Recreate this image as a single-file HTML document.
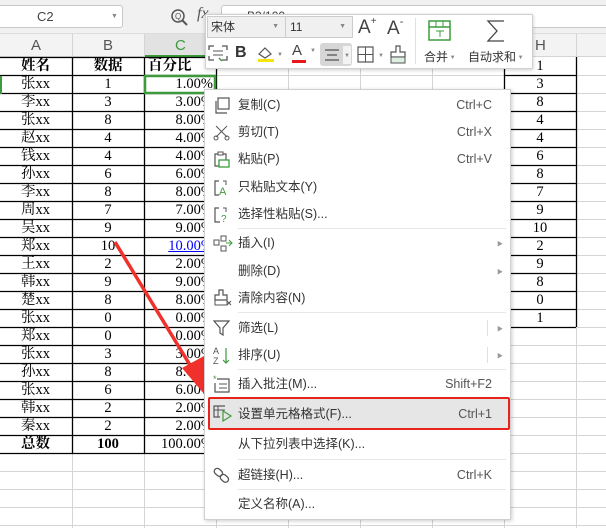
<!DOCTYPE html>
<html><head><meta charset="utf-8"><style>
*{margin:0;padding:0;box-sizing:border-box}
body{width:606px;height:528px;overflow:hidden;background:#fff;position:relative;font-family:"Liberation Sans","Noto Sans CJK SC",sans-serif}
.a{position:absolute}
.cell{position:absolute;height:18px;line-height:19px;font-family:"Liberation Serif","Noto Serif CJK SC",serif;font-size:14.5px;color:#000;white-space:nowrap;overflow:hidden}
.mi{position:absolute;left:238px;font-size:12.5px;color:#333;line-height:16px}
.sc{position:absolute;right:114px;font-size:12.5px;color:#555;line-height:16px}
.sep{position:absolute;left:238px;width:268px;height:1px;background:#e6e6e6}
.ic{position:absolute;left:213px}
</style></head><body>
<div class="a" style="left:0;top:0;width:606px;height:34px;background:#f1f1f1;border-bottom:1px solid #ddd"></div>
<div class="a" style="left:-4px;top:5px;width:127px;height:23px;background:#fff;border:1px solid #c8c8c8;border-radius:3px;font-size:13px;color:#444;line-height:21px;padding-left:40px">C2<span style="position:absolute;left:114px;top:0;font-size:7px;color:#888">▼</span></div>
<svg class="a" style="left:170px;top:8px" width="20" height="20"><circle cx="8" cy="8" r="6" fill="none" stroke="#555" stroke-width="1.5"/><line x1="12" y1="12" x2="17" y2="17" stroke="#555" stroke-width="2"/><text x="5" y="11" font-size="8" fill="#555" font-family="Liberation Sans">Q</text></svg>
<div class="a" style="left:197px;top:5px;font-family:'Liberation Serif',serif;font-style:italic;font-size:16px;color:#555">fx</div>
<div class="a" style="left:221px;top:5px;width:390px;height:23px;background:#fff;border:1px solid #c8c8c8;border-radius:3px;font-size:12px;color:#444;padding-left:18px;line-height:21px">=B3/100</div>
<div class="a" style="left:0;top:34px;width:606px;height:23px;background:#f3f3f3;border-bottom:1px solid #d4d4d4"></div>
<div class="a" style="left:144px;top:34px;width:72px;height:23px;background:#e2e2e2;border-bottom:2px solid #3d9b3d"></div>
<div class="a" style="left:0;top:34px;width:606px;height:23px;font-size:15px;color:#555;line-height:24px">
<span class="a" style="left:31px">A</span><span class="a" style="left:103px">B</span><span class="a" style="left:175px;color:#3d9b3d">C</span><span class="a" style="left:535px">H</span></div>
<svg class="a" style="left:0;top:34px" width="606" height="494">
<g stroke="#d4d4d4" stroke-width="1">
<line x1="72.5" y1="0" x2="72.5" y2="23"/><line x1="144.5" y1="0" x2="144.5" y2="23"/><line x1="216.5" y1="0" x2="216.5" y2="494"/><line x1="288.5" y1="0" x2="288.5" y2="494"/><line x1="360.5" y1="0" x2="360.5" y2="494"/><line x1="432.5" y1="0" x2="432.5" y2="494"/><line x1="504.5" y1="0" x2="504.5" y2="494"/><line x1="576.5" y1="0" x2="576.5" y2="494"/>
<line x1="72.5" y1="419" x2="72.5" y2="494"/><line x1="144.5" y1="419" x2="144.5" y2="494"/>
</g>
<g stroke="#d4d4d4">
<line x1="0" y1="41.5" x2="606" y2="41.5"/><line x1="0" y1="59.5" x2="606" y2="59.5"/><line x1="0" y1="77.5" x2="606" y2="77.5"/><line x1="0" y1="95.5" x2="606" y2="95.5"/><line x1="0" y1="113.5" x2="606" y2="113.5"/><line x1="0" y1="131.5" x2="606" y2="131.5"/><line x1="0" y1="149.5" x2="606" y2="149.5"/><line x1="0" y1="167.5" x2="606" y2="167.5"/><line x1="0" y1="185.5" x2="606" y2="185.5"/><line x1="0" y1="203.5" x2="606" y2="203.5"/><line x1="0" y1="221.5" x2="606" y2="221.5"/><line x1="0" y1="239.5" x2="606" y2="239.5"/><line x1="0" y1="257.5" x2="606" y2="257.5"/><line x1="0" y1="275.5" x2="606" y2="275.5"/><line x1="0" y1="293.5" x2="606" y2="293.5"/><line x1="0" y1="311.5" x2="606" y2="311.5"/><line x1="0" y1="329.5" x2="606" y2="329.5"/><line x1="0" y1="347.5" x2="606" y2="347.5"/><line x1="0" y1="365.5" x2="606" y2="365.5"/><line x1="0" y1="383.5" x2="606" y2="383.5"/><line x1="0" y1="401.5" x2="606" y2="401.5"/><line x1="0" y1="419.5" x2="606" y2="419.5"/><line x1="0" y1="437.5" x2="606" y2="437.5"/><line x1="0" y1="455.5" x2="606" y2="455.5"/><line x1="0" y1="473.5" x2="606" y2="473.5"/><line x1="0" y1="491.5" x2="606" y2="491.5"/>
</g>
<g stroke="#000" stroke-width="1.3">
<line x1="0" y1="23.5" x2="216" y2="23.5"/>
<line x1="72.5" y1="23" x2="72.5" y2="419"/><line x1="144.5" y1="23" x2="144.5" y2="419"/><line x1="216.5" y1="23" x2="216.5" y2="419"/>
<line x1="0" y1="41.5" x2="216" y2="41.5"/><line x1="0" y1="59.5" x2="216" y2="59.5"/><line x1="0" y1="77.5" x2="216" y2="77.5"/><line x1="0" y1="95.5" x2="216" y2="95.5"/><line x1="0" y1="113.5" x2="216" y2="113.5"/><line x1="0" y1="131.5" x2="216" y2="131.5"/><line x1="0" y1="149.5" x2="216" y2="149.5"/><line x1="0" y1="167.5" x2="216" y2="167.5"/><line x1="0" y1="185.5" x2="216" y2="185.5"/><line x1="0" y1="203.5" x2="216" y2="203.5"/><line x1="0" y1="221.5" x2="216" y2="221.5"/><line x1="0" y1="239.5" x2="216" y2="239.5"/><line x1="0" y1="257.5" x2="216" y2="257.5"/><line x1="0" y1="275.5" x2="216" y2="275.5"/><line x1="0" y1="293.5" x2="216" y2="293.5"/><line x1="0" y1="311.5" x2="216" y2="311.5"/><line x1="0" y1="329.5" x2="216" y2="329.5"/><line x1="0" y1="347.5" x2="216" y2="347.5"/><line x1="0" y1="365.5" x2="216" y2="365.5"/><line x1="0" y1="383.5" x2="216" y2="383.5"/><line x1="0" y1="401.5" x2="216" y2="401.5"/><line x1="0" y1="419.5" x2="216" y2="419.5"/>
<line x1="504.5" y1="23" x2="504.5" y2="293"/><line x1="576.5" y1="23" x2="576.5" y2="293"/>
<line x1="504" y1="41.5" x2="576" y2="41.5"/><line x1="504" y1="59.5" x2="576" y2="59.5"/><line x1="504" y1="77.5" x2="576" y2="77.5"/><line x1="504" y1="95.5" x2="576" y2="95.5"/><line x1="504" y1="113.5" x2="576" y2="113.5"/><line x1="504" y1="131.5" x2="576" y2="131.5"/><line x1="504" y1="149.5" x2="576" y2="149.5"/><line x1="504" y1="167.5" x2="576" y2="167.5"/><line x1="504" y1="185.5" x2="576" y2="185.5"/><line x1="504" y1="203.5" x2="576" y2="203.5"/><line x1="504" y1="221.5" x2="576" y2="221.5"/><line x1="504" y1="239.5" x2="576" y2="239.5"/><line x1="504" y1="257.5" x2="576" y2="257.5"/><line x1="504" y1="275.5" x2="576" y2="275.5"/><line x1="504" y1="293.5" x2="576" y2="293.5"/>
</g>
<rect x="145" y="42" width="70" height="17" fill="none" stroke="#3d9b3d" stroke-width="2.5"/>
<rect x="0" y="42" width="2" height="18" fill="#3d9b3d"/>
</svg>
<div id="cells"></div>
<script>
var A=["<b>姓名</b>","张xx","李xx","张xx","赵xx","钱xx","孙xx","李xx","周xx","吴xx","郑xx","王xx","韩xx","楚xx","张xx","郑xx","张xx","孙xx","张xx","韩xx","秦xx","<b>总数</b>"];
var B=["<b>数据</b>","1","3","8","4","4","6","8","7","9","10","2","9","8","0","0","3","8","6","2","2","<b>100</b>"];
var H=["1","3","8","4","4","6","8","7","9","10","2","9","8","0","1"];
var h="";
for(var i=0;i<22;i++){var t=57+i*18;
h+='<div class="cell" style="left:0;width:72px;top:'+t+'px;padding-left:21px">'+A[i]+'</div>';
h+='<div class="cell" style="left:72px;width:72px;top:'+t+'px;text-align:center">'+B[i]+'</div>';
var c=i==0?'<b>百分比</b>':(i==21?'100.00%':B[i]+'.00%');
var st=i==0?'padding-left:4px':'text-align:right;padding-right:3px';
if(i==10)c='<u style="color:#00f">10.00%</u>';
h+='<div class="cell" style="left:144px;width:72px;top:'+t+'px;'+st+'">'+c+'</div>';}
for(var j=0;j<15;j++){h+='<div class="cell" style="left:504px;width:72px;top:'+(57+j*18)+'px;text-align:center">'+H[j]+'</div>';}
document.getElementById('cells').innerHTML=h;
</script>
<svg class="a" style="left:0;top:0" width="606" height="528">
<line x1="115" y1="242" x2="193" y2="370" stroke="#f0302a" stroke-width="3.5"/>
<polygon points="182,368 204,356 205,395" fill="#f0302a"/>
</svg>
<div class="a" style="left:205px;top:14px;width:328px;height:55px;background:#fff;border:1px solid #d0d0d0;box-shadow:0 1px 4px rgba(0,0,0,.2)"></div>
<div class="a" style="left:207px;top:16px;width:79px;height:22px;background:#f0f0f0;border:1px solid #ccc;font-size:12px;color:#333;line-height:20px;padding-left:3px">宋体<span style="position:absolute;right:6px;font-size:7px;color:#888">▼</span></div>
<div class="a" style="left:285px;top:16px;width:68px;height:22px;background:#f0f0f0;border:1px solid #ccc;font-size:12px;color:#333;line-height:20px;padding-left:4px">11<span style="position:absolute;right:6px;font-size:7px;color:#888">▼</span></div>
<div class="a" style="left:358px;top:16px;font-size:19px;color:#444">A<sup style="font-size:10px;vertical-align:9px">+</sup></div>
<div class="a" style="left:387px;top:16px;font-size:19px;color:#444">A<sup style="font-size:11px;vertical-align:9px">-</sup></div>
<div class="a" style="left:415px;top:18px;width:1px;height:46px;background:#e0e0e0"></div>
<svg class="a" style="left:428px;top:20px" width="24" height="22"><rect x="1" y="1" width="21" height="19" fill="none" stroke="#3d9b3d" stroke-width="1.5"/><line x1="1" y1="7" x2="22" y2="7" stroke="#3d9b3d" stroke-width="1.5"/><line x1="8" y1="1" x2="8" y2="7" stroke="#3d9b3d"/><line x1="15" y1="1" x2="15" y2="7" stroke="#3d9b3d"/><line x1="8" y1="11" x2="16" y2="11" stroke="#3d9b3d"/><line x1="12" y1="11" x2="12" y2="17" stroke="#3d9b3d"/></svg>
<svg class="a" style="left:485px;top:18px" width="22" height="26"><path d="M19 3H3l9 10-9 10h16" fill="none" stroke="#444" stroke-width="1.3"/></svg>
<svg class="a" style="left:207px;top:44px" width="22" height="20"><path d="M2 6V2h5M15 2h5v4M2 12v4h5M20 12v4h-5" fill="none" stroke="#555" stroke-width="1.3"/><line x1="6" y1="7" x2="16" y2="7" stroke="#555"/><line x1="6" y1="11" x2="16" y2="11" stroke="#555"/><path d="M12 14l3 3" stroke="#3d9b3d" stroke-width="1.5"/></svg>
<div class="a" style="left:235px;top:44px;font-size:16px;font-weight:bold;color:#333">B</div>
<svg class="a" style="left:257px;top:44px" width="26" height="20"><path d="M2 10l6-6 6 6-6 4z" fill="none" stroke="#555" stroke-width="1.2"/><rect x="1" y="15" width="16" height="3" fill="#f5e50a"/><text x="20" y="12" font-size="6" fill="#888">▼</text></svg>
<div class="a" style="left:292px;top:42px;font-size:15px;color:#444">A</div>
<div class="a" style="left:292px;top:60px;width:14px;height:3px;background:#e81818"></div>
<div class="a" style="left:310px;top:48px;font-size:6px;color:#888">▼</div>
<div class="a" style="left:320px;top:43px;width:32px;height:23px;background:#d6d6d6;border-radius:3px"></div>
<svg class="a" style="left:323px;top:46px" width="30" height="18"><line x1="2" y1="4" x2="16" y2="4" stroke="#333"/><line x1="4" y1="9" x2="14" y2="9" stroke="#333"/><line x1="2" y1="14" x2="16" y2="14" stroke="#333"/><rect x="20" y="0" width="8" height="18" fill="#f3f3f3"/><text x="21" y="11" font-size="6" fill="#888">▼</text></svg>
<svg class="a" style="left:357px;top:45px" width="30" height="20"><rect x="1" y="2" width="15" height="15" fill="none" stroke="#555" stroke-width="1.2"/><line x1="8.5" y1="2" x2="8.5" y2="17" stroke="#555"/><line x1="1" y1="9.5" x2="16" y2="9.5" stroke="#555"/><text x="21" y="12" font-size="6" fill="#888">▼</text></svg>
<svg class="a" style="left:389px;top:44px" width="20" height="22"><path d="M7 2h4v6h5v5H2V8h5z" fill="none" stroke="#555" stroke-width="1.2"/><rect x="2" y="13" width="14" height="6" fill="#dcefe0" stroke="#555"/></svg>
<div class="a" style="left:424px;top:48px;font-size:12px;color:#333">合并<span style="font-size:6px;color:#888;vertical-align:2px"> ▼</span></div>
<div class="a" style="left:468px;top:48px;font-size:12px;color:#333">自动求和<span style="font-size:6px;color:#888;vertical-align:2px"> ▼</span></div>
<div class="a" style="left:204px;top:89px;width:307px;height:431px;background:#fff;border:1px solid #d0d0d0;box-shadow:1px 1px 4px rgba(0,0,0,.2)"></div>
<div class="a" style="left:210px;top:399px;width:298px;height:30px;background:#e6e6e6"></div>
<div class="a" style="left:208px;top:397px;width:302px;height:33px;border:2px solid #e8231c;border-radius:2px"></div>
<div class="mi" style="top:97px">复制(C)</div><div class="sc" style="top:97px">Ctrl+C</div>
<div class="mi" style="top:124px">剪切(T)</div><div class="sc" style="top:124px">Ctrl+X</div>
<div class="mi" style="top:151px">粘贴(P)</div><div class="sc" style="top:151px">Ctrl+V</div>
<div class="mi" style="top:179px">只粘贴文本(Y)</div>
<div class="mi" style="top:206px">选择性粘贴(S)...</div>
<div class="sep" style="top:228px"></div>
<div class="mi" style="top:235px">插入(I)</div><div class="a" style="left:497px;top:239px;font-size:6px;color:#999">▶</div>
<div class="mi" style="top:263px">删除(D)</div><div class="a" style="left:497px;top:267px;font-size:6px;color:#999">▶</div>
<div class="mi" style="top:290px">清除内容(N)</div>
<div class="sep" style="top:312px"></div>
<div class="mi" style="top:320px">筛选(L)</div><div class="a" style="left:487px;top:320px;width:1px;height:16px;background:#e0e0e0"></div><div class="a" style="left:497px;top:324px;font-size:6px;color:#999">▶</div>
<div class="mi" style="top:347px">排序(U)</div><div class="a" style="left:487px;top:347px;width:1px;height:16px;background:#e0e0e0"></div><div class="a" style="left:497px;top:351px;font-size:6px;color:#999">▶</div>
<div class="sep" style="top:369px"></div>
<div class="mi" style="top:376px">插入批注(M)...</div><div class="sc" style="top:376px">Shift+F2</div>
<div class="mi" style="top:406px">设置单元格格式(F)...</div><div class="sc" style="top:406px">Ctrl+1</div>
<div class="mi" style="top:436px">从下拉列表中选择(K)...</div>
<div class="sep" style="top:459px"></div>
<div class="mi" style="top:467px">超链接(H)...</div><div class="sc" style="top:467px">Ctrl+K</div>
<div class="sep" style="top:489px"></div>
<div class="mi" style="top:496px">定义名称(A)...</div>
<svg class="ic" style="top:97px" width="18" height="18"><rect x="5" y="1" width="11" height="11" fill="none" stroke="#555" stroke-width="1.2"/><path d="M3 4v12h11" fill="none" stroke="#555" stroke-width="1.2"/></svg>
<svg class="ic" style="top:124px" width="18" height="18"><line x1="3" y1="2" x2="14" y2="13" stroke="#555"/><line x1="14" y1="2" x2="3" y2="13" stroke="#555"/><circle cx="3" cy="14" r="2" fill="none" stroke="#555"/><circle cx="14" cy="14" r="2" fill="none" stroke="#555"/></svg>
<svg class="ic" style="top:151px" width="18" height="18"><path d="M2 3h11v12H2z" fill="none" stroke="#555" stroke-width="1.2"/><rect x="5" y="1" width="5" height="3" fill="#fff" stroke="#555"/><rect x="6" y="9" width="10" height="7" fill="#fff" stroke="#3d9b3d" stroke-width="1.3"/></svg>
<svg class="ic" style="top:179px" width="18" height="18"><path d="M6 2H2v14h4" fill="none" stroke="#555" stroke-width="1.2"/><path d="M10 2h3v4" fill="none" stroke="#555"/><text x="6" y="16" font-size="11" fill="#3d9b3d" font-family="Liberation Sans">A</text></svg>
<svg class="ic" style="top:206px" width="18" height="18"><path d="M6 2H2v14h5" fill="none" stroke="#555" stroke-width="1.2"/><path d="M10 2h3v4" fill="none" stroke="#555"/><text x="8" y="16" font-size="10" fill="#3d9b3d" font-family="Liberation Sans">?</text></svg>
<svg class="ic" style="top:235px" width="20" height="18"><rect x="1" y="5" width="5" height="5" fill="none" stroke="#555"/><rect x="8" y="1" width="5" height="5" fill="none" stroke="#555"/><rect x="8" y="11" width="5" height="5" fill="none" stroke="#555"/><path d="M13 8h6M16 5l3 3-3 3" fill="none" stroke="#3d9b3d"/></svg>
<svg class="ic" style="top:289px" width="20" height="18"><path d="M6 1h4v5h4v5H2V6h4z" fill="none" stroke="#555" stroke-width="1.2"/><rect x="2" y="11" width="12" height="5" fill="none" stroke="#555"/><path d="M14 12l4 4M18 12l-4 4" stroke="#555"/></svg>
<svg class="ic" style="top:319px" width="18" height="18"><path d="M1 2h15l-6 7v7l-3-2V9z" fill="none" stroke="#555" stroke-width="1.2"/></svg>
<svg class="ic" style="top:346px" width="20" height="20"><text x="0" y="8" font-size="9" fill="#555" font-family="Liberation Sans">A</text><text x="0" y="18" font-size="9" fill="#555" font-family="Liberation Sans">Z</text><path d="M13 2v15M10 14l3 3 3-3" fill="none" stroke="#3d9b3d" stroke-width="1.2"/></svg>
<svg class="ic" style="top:375px" width="20" height="20"><text x="0" y="7" font-size="9" fill="#3d9b3d">*</text><path d="M4 4h12v13H2V8" fill="none" stroke="#555" stroke-width="1.2"/><line x1="6" y1="9" x2="14" y2="9" stroke="#555"/><line x1="6" y1="13" x2="14" y2="13" stroke="#555"/></svg>
<svg class="ic" style="top:404px" width="20" height="18"><path d="M12 2H1v11h6" fill="none" stroke="#555" stroke-width="1.2"/><line x1="1" y1="6" x2="12" y2="6" stroke="#555"/><line x1="5" y1="2" x2="5" y2="13" stroke="#555"/><path d="M10 7l8 5-8 5z" fill="none" stroke="#3d9b3d" stroke-width="1.2"/></svg>
<svg class="ic" style="top:466px" width="20" height="18"><rect x="1" y="3" width="9" height="6" rx="3" transform="rotate(40 5 6)" fill="none" stroke="#555" stroke-width="1.3"/><rect x="7" y="9" width="9" height="6" rx="3" transform="rotate(40 11 12)" fill="none" stroke="#555" stroke-width="1.3"/></svg>
</body></html>
